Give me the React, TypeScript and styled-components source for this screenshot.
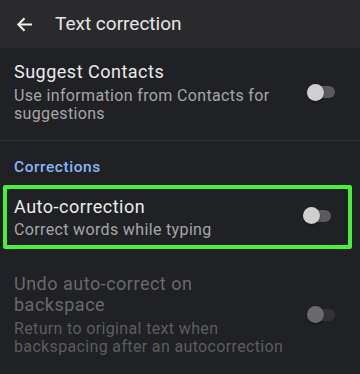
import React, { useState } from 'react'
import styled, { createGlobalStyle } from 'styled-components'

const GlobalStyle = createGlobalStyle`
  html, body {
    margin: 0;
    padding: 0;
    background: #202124;
  }
  body {
    font-family: Roboto, 'Noto Sans', Arial, sans-serif;
    -webkit-font-smoothing: antialiased;
  }
`

const Page = styled.div`
  width: 360px;
  height: 374px;
  background: #202124;
  overflow: hidden;
  display: flex;
  flex-direction: column;
`

const TopBar = styled.div`
  height: 48px;
  flex-shrink: 0;
  background: #2a2a2c;
  display: flex;
  align-items: center;
  padding-left: 16px;
  gap: 22px;
`

const BackButton = styled.button`
  border: none;
  background: none;
  padding: 0;
  width: 17px;
  height: 17px;
  display: flex;
  align-items: center;
  justify-content: center;
  color: #f1f1f1;
  cursor: pointer;
`

const TopTitle = styled.div`
  font-size: 19px;
  color: #e6e6e6;
  line-height: 1;
  padding-bottom: 1px;
`

const SettingRow = styled.div<{ $highlight?: boolean; $top?: number; $bottom?: number }>`
  display: flex;
  align-items: center;
  justify-content: space-between;
  padding: ${p =>
    p.$highlight
      ? '7px 17px 5px 7px'
      : `${p.$top ?? 13}px 25px ${p.$bottom ?? 16}px 14px`};
  margin: ${p => (p.$highlight ? '0 8px 0 3px' : '0')};
  border: ${p => (p.$highlight ? '4px solid #4cee3c' : 'none')};
  border-radius: 2px;
`

const TextBlock = styled.div`
  display: flex;
  flex-direction: column;
  max-width: 272px;
`

const RowTitle = styled.div<{ $disabled?: boolean }>`
  font-size: 18px;
  line-height: 21.5px;
  letter-spacing: 0.5px;
  color: ${p => (p.$disabled ? '#69696b' : '#ececec')};
`

const RowSummary = styled.div<{ $disabled?: boolean }>`
  font-size: 16px;
  line-height: 18.5px;
  letter-spacing: 0.35px;
  margin-top: 4px;
  color: ${p => (p.$disabled ? '#5d5d5f' : '#a6a6a8')};
`

const Divider = styled.div`
  height: 1px;
  flex-shrink: 0;
  background: #2f2f31;
`

const CategoryLabel = styled.div`
  font-size: 15.5px;
  font-weight: 500;
  letter-spacing: 0.55px;
  color: #8ab4f8;
  padding: 17px 14px 9px;
  line-height: 18px;
`

const SwitchTrack = styled.button<{ $disabled?: boolean; $lift?: boolean }>`
  position: relative;
  flex-shrink: 0;
  width: 28px;
  height: 12px;
  border: none;
  border-radius: 6px;
  padding: 0;
  margin-bottom: ${p => (p.$lift ? '4px' : '0')};
  background: ${p => (p.$disabled ? '#333335' : '#5a5a5c')};
  cursor: pointer;
`

const SwitchThumb = styled.span<{ $disabled?: boolean; $on: boolean }>`
  position: absolute;
  top: -2.5px;
  left: ${p => (p.$on ? '11px' : '0')};
  width: 17px;
  height: 17px;
  border-radius: 50%;
  background: ${p => (p.$disabled ? '#6a6a6c' : '#cfcfcf')};
  box-shadow: 0 1px 2px rgba(0, 0, 0, 0.4);
`

const Toggle: React.FC<{ disabled?: boolean; lift?: boolean }> = ({ disabled, lift }) => {
  const [on, setOn] = useState(false)
  return (
    <SwitchTrack $disabled={disabled} $lift={lift} onClick={() => !disabled && setOn(!on)}>
      <SwitchThumb $disabled={disabled} $on={on} />
    </SwitchTrack>
  )
}

const App: React.FC = () => {
  return (
    <Page>
      <GlobalStyle />
      <TopBar>
        <BackButton>
          <svg width="17" height="17" viewBox="0 0 16 16" fill="none">
            <path d="M15 8H2.5M8 2.2L2.2 8L8 13.8" stroke="currentColor" strokeWidth="1.9" />
          </svg>
        </BackButton>
        <TopTitle>Text correction</TopTitle>
      </TopBar>

      <SettingRow>
        <TextBlock>
          <RowTitle>Suggest Contacts</RowTitle>
          <RowSummary>Use information from Contacts for suggestions</RowSummary>
        </TextBlock>
        <Toggle />
      </SettingRow>
      <Divider />

      <CategoryLabel>Corrections</CategoryLabel>

      <SettingRow $highlight>
        <TextBlock>
          <RowTitle>Auto-correction</RowTitle>
          <RowSummary>Correct words while typing</RowSummary>
        </TextBlock>
        <Toggle lift />
      </SettingRow>

      <SettingRow $top={24}>
        <TextBlock>
          <RowTitle $disabled>Undo auto-correct on backspace</RowTitle>
          <RowSummary $disabled>Return to original text when backspacing after an autocorrection</RowSummary>
        </TextBlock>
        <Toggle disabled />
      </SettingRow>
    </Page>
  )
}

export default App
